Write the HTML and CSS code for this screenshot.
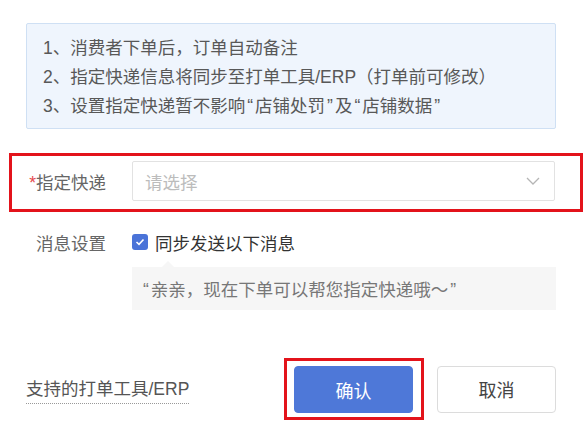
FILE: index.html
```html
<!DOCTYPE html>
<html lang="zh">
<head>
<meta charset="utf-8">
<link rel="stylesheet" href="styles.css">
</head>
<body>
<div class="page">
  <div class="notice">
    <p>1、消费者下单后，订单自动备注</p>
    <p>2、指定快递信息将同步至打单工具/ERP（打单前可修改）</p>
    <p>3、设置指定快递暂不影响<span class="q">“</span>店铺处罚<span class="q">”</span>及<span class="q">“</span>店铺数据<span class="q">”</span></p>
  </div>

  <div class="field-row highlight">
    <div class="label"><span class="req">*</span>指定快递</div>
    <div class="select">
      <span class="placeholder">请选择</span>
      <svg class="chev" width="14" height="8" viewBox="0 0 14 8"><path d="M1 1 L7 7 L13 1" fill="none" stroke="#b5b5b5" stroke-width="1.3"/></svg>
    </div>
  </div>

  <div class="field-row msg-row">
    <div class="label">消息设置</div>
    <label class="check">
      <span class="box"><svg width="10" height="8" viewBox="0 0 10 8"><path d="M1.5 4 L4 6.3 L8.5 1.5" fill="none" stroke="#fff" stroke-width="1.6"/></svg></span>
      同步发送以下消息
    </label>
  </div>

  <div class="message">
    <span class="arrow"></span>
    <span><span class="q">“</span>亲亲，现在下单可以帮您指定快递哦～<span class="q">”</span></span>
  </div>

  <div class="footer">
    <a class="tools">支持的打单工具/ERP</a>
    <div class="actions">
      <span class="mark"><button class="btn primary">确认</button></span>
      <button class="btn">取消</button>
    </div>
  </div>
</div>
</body>
</html>
```

FILE: styles.css
```css
html, body {
  margin: 0;
  padding: 0;
  background: #fff;
}
body {
  font-family: "Liberation Sans", "Noto Sans CJK SC", sans-serif;
  font-size: 17.5px;
  color: #555;
}
.page {
  padding: 23px 30px 0 26px;
}
.notice {
  box-sizing: border-box;
  height: 106px;
  background: #eff5fd;
  border: 1px solid #cfe0f4;
  border-radius: 2px;
  padding: 10px 0 0 16px;
}
.notice p {
  margin: 0;
  line-height: 29px;
  color: #585858;
}
.q {
  margin: 0 2px;
}
.field-row {
  display: flex;
  align-items: center;
}
.label {
  width: 80px;
  text-align: right;
  margin-right: 26px;
  color: #666;
  flex: none;
}
.req {
  color: #e5484d;
}
.highlight {
  margin: 24px -27px 0 -17px;
  border: 3px solid #e3131b;
  padding: 5px 25px 8px 14px;
}
.select {
  flex: 1;
  height: 40px;
  box-sizing: border-box;
  border: 1px solid #e2e2e2;
  border-radius: 2px;
  display: flex;
  align-items: center;
  justify-content: space-between;
  padding: 0 14px 0 12px;
}
.placeholder {
  color: #bcbcbc;
}
.chev {
  display: block;
}
.msg-row {
  margin-top: 18px;
  height: 24px;
}
.check {
  display: flex;
  align-items: center;
  color: #333;
}
.box {
  width: 16px;
  height: 16px;
  border-radius: 3px;
  background: #4a73d8;
  display: flex;
  align-items: center;
  justify-content: center;
  margin-right: 7px;
}
.box svg {
  display: block;
}
.message {
  position: relative;
  margin: 13px 0 0 106px;
  height: 43px;
  background: #f6f6f6;
  display: flex;
  align-items: center;
  padding-left: 9px;
  color: #777;
}
.arrow {
  position: absolute;
  left: 30px;
  top: -6px;
  width: 0;
  height: 0;
  border-left: 6px solid transparent;
  border-right: 6px solid transparent;
  border-bottom: 6px solid #f6f6f6;
}
.footer {
  margin-top: 48px;
  display: flex;
  align-items: center;
  justify-content: space-between;
}
.tools {
  color: #555;
  border-bottom: 1px dotted #999;
  line-height: 26px;
  padding-bottom: 1px;
  margin-top: 2px;
}
.actions {
  display: flex;
  align-items: center;
}
.mark {
  border: 3px solid #e3131b;
  padding: 5px 8px 4px 7px;
  display: flex;
  margin-right: 13px;
}
.btn {
  width: 119px;
  height: 47px;
  box-sizing: border-box;
  border-radius: 4px;
  border: 1px solid #dcdcdc;
  background: #fff;
  font-family: inherit;
  font-size: 18px;
  color: #444;
  padding: 0;
}
.primary {
  background: #4e78d8;
  border-color: #4e78d8;
  color: #fff;
}
```
